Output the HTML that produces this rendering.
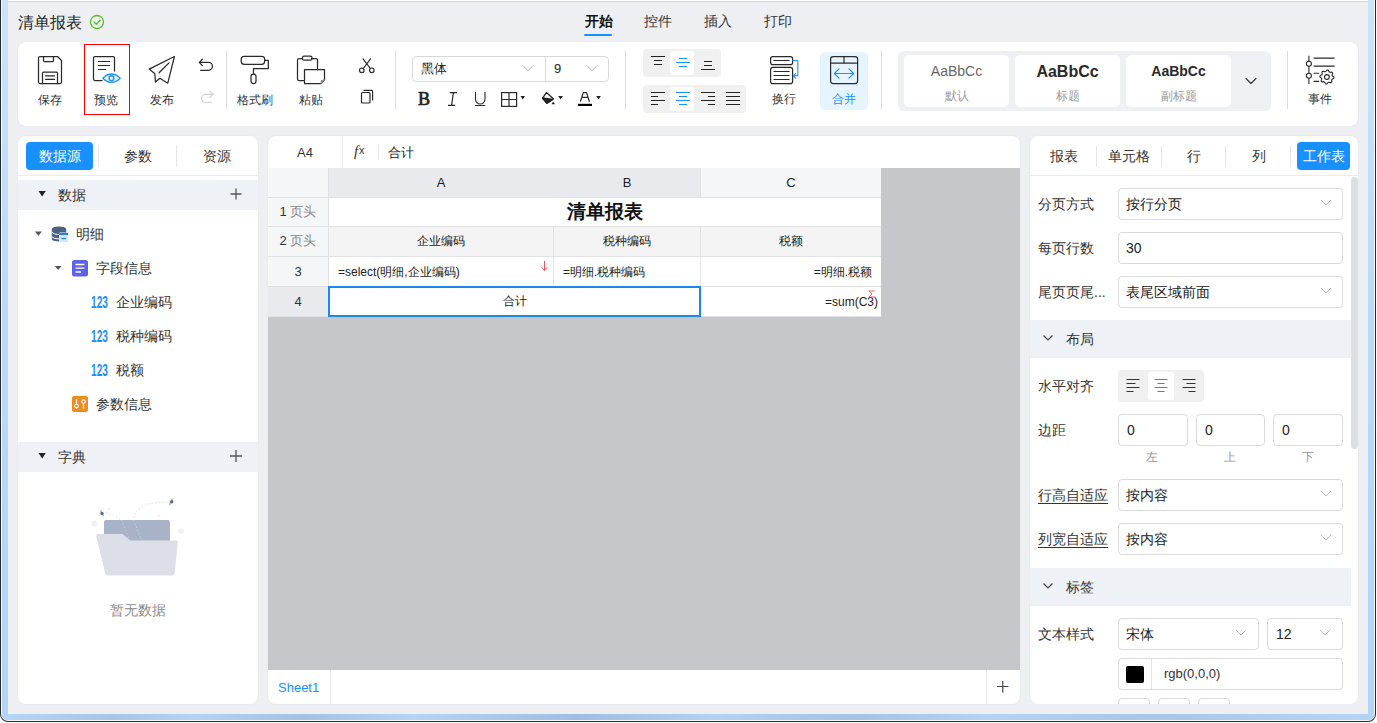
<!DOCTYPE html>
<html><head><meta charset="utf-8">
<style>
*{margin:0;padding:0;box-sizing:border-box}
html,body{width:1377px;height:723px;overflow:hidden;background:#fff}
body{position:relative;font-family:"Liberation Sans",sans-serif;color:#333;font-size:14px}
.a{position:absolute}
.t{position:absolute;white-space:nowrap;line-height:1}
.pnl{position:absolute;background:#fff;border-radius:8px;box-shadow:0 0 2px rgba(0,0,0,0.06)}
.sep{position:absolute;width:1px;background:#dcdcdc}
svg.ov{position:absolute;left:0;top:0;width:1377px;height:723px;overflow:visible}
</style></head><body>
<!-- window frame -->
<div class="a" style="left:0;top:0;width:1377px;height:723px;background:#fff"></div>
<div class="a" style="left:0;top:0;width:1376px;height:722px;background:#252b33;border-radius:0 0 8px 8px"></div>
<div class="a" style="left:1px;top:0;width:1374px;height:721px;background:#f4fbff;border-radius:0 0 7px 7px"></div>
<div class="a" style="left:2px;top:0;width:1372px;height:720px;background:linear-gradient(#cce3fa,#bbdaf8 40%,#b3d4f5);border-radius:0 0 6px 6px"></div>
<div class="a" style="left:2px;top:714px;width:1372px;height:6px;background:linear-gradient(90deg,#b5d6f6 0%,#a6c6e8 8%,#b3d3f3 14%,#a3c3e5 22%,#b4d4f4 30%,#9fbfe2 42%,#b2d2f3 52%,#a4c4e6 62%,#b3d3f4 72%,#a7c7e9 84%,#b4d5f6 100%);border-radius:0 0 6px 6px"></div>
<div class="a" style="left:8px;top:0;width:1360px;height:714px;background:#eeeff3"></div>
<div class="a" style="left:8px;top:0;width:1360px;height:1px;background:#fff"></div>
<div class="a" style="left:8px;top:1px;width:1360px;height:1px;background:#d8d9dc"></div>
<!-- title -->
<div class="t" style="left:18px;top:15px;font-size:16px;color:#222">清单报表</div>
<div class="t" style="left:585px;top:14px;font-size:14px;color:#111;font-weight:bold">开始</div>
<div class="a" style="left:584px;top:34px;width:28px;height:2px;background:#1890ff;border-radius:1px"></div>
<div class="t" style="left:644px;top:14px;font-size:14px;color:#333">控件</div>
<div class="t" style="left:704px;top:14px;font-size:14px;color:#333">插入</div>
<div class="t" style="left:764px;top:14px;font-size:14px;color:#333">打印</div>

<!-- toolbar -->
<div class="pnl" style="left:18px;top:42px;width:1340px;height:84px"></div>
<div id="toolbar">
<div class="t" style="left:38px;top:94px;font-size:12px;color:#333">保存</div>
<div class="a" style="left:84px;top:44px;width:46px;height:71px;border:1px solid #f00"></div>
<div class="t" style="left:94px;top:94px;font-size:12px;color:#333">预览</div>
<div class="t" style="left:150px;top:94px;font-size:12px;color:#333">发布</div>
<div class="sep" style="left:226px;top:51px;height:58px"></div>
<div class="t" style="left:237px;top:94px;font-size:12px;color:#333">格式刷</div>
<div class="t" style="left:299px;top:94px;font-size:12px;color:#333">粘贴</div>
<div class="sep" style="left:395px;top:51px;height:58px"></div>
<div class="a" style="left:412px;top:56px;width:197px;height:26px;border:1px solid #d9d9d9;border-radius:4px"></div>
<div class="a" style="left:545px;top:57px;width:1px;height:24px;background:#d9d9d9"></div>
<div class="t" style="left:421px;top:62px;font-size:13px;color:#222">黑体</div>
<div class="t" style="left:554px;top:62px;font-size:13px;color:#222">9</div>
<div class="t" style="left:418px;top:90px;font-size:18px;color:#222;font-family:'Liberation Serif',serif;-webkit-text-stroke:0.7px #222">B</div>


<div class="sep" style="left:625px;top:51px;height:58px"></div>
<div class="a" style="left:643px;top:49px;width:78px;height:28px;background:#f0f0f0;border-radius:4px"></div>
<div class="a" style="left:670px;top:51px;width:24px;height:24px;background:#fff;border-radius:3px"></div>
<div class="a" style="left:643px;top:85px;width:103px;height:28px;background:#f0f0f0;border-radius:4px"></div>
<div class="a" style="left:670px;top:87px;width:24px;height:24px;background:#fff;border-radius:3px"></div>
<div class="t" style="left:772px;top:93px;font-size:12px;color:#333">换行</div>
<div class="a" style="left:820px;top:52px;width:48px;height:58px;background:#e6f4ff;border-radius:5px"></div>
<div class="t" style="left:832px;top:93px;font-size:12px;color:#1890ff">合并</div>
<div class="sep" style="left:881px;top:51px;height:58px"></div>
<div class="a" style="left:898px;top:51px;width:373px;height:60px;background:#eff0f4;border-radius:6px"></div>
<div class="a" style="left:904px;top:55px;width:105px;height:52px;background:#fff;border-radius:5px"></div>
<div class="a" style="left:1015px;top:55px;width:105px;height:52px;background:#fff;border-radius:5px"></div>
<div class="a" style="left:1126px;top:55px;width:105px;height:52px;background:#fff;border-radius:5px"></div>
<div class="t" style="left:904px;top:64px;width:105px;text-align:center;font-size:14px;color:#666">AaBbCc</div>
<div class="t" style="left:904px;top:90px;width:105px;text-align:center;font-size:12px;color:#999">默认</div>
<div class="t" style="left:1015px;top:64px;width:105px;text-align:center;font-size:16px;color:#2a2a2a;font-weight:bold">AaBbCc</div>
<div class="t" style="left:1015px;top:90px;width:105px;text-align:center;font-size:12px;color:#999">标题</div>
<div class="t" style="left:1126px;top:64px;width:105px;text-align:center;font-size:14px;color:#2a2a2a;font-weight:bold">AaBbCc</div>
<div class="t" style="left:1126px;top:90px;width:105px;text-align:center;font-size:12px;color:#999">副标题</div>
<div class="sep" style="left:1287px;top:51px;height:58px"></div>
<div class="t" style="left:1308px;top:93px;font-size:12px;color:#333">事件</div>
</div>
<svg class="ov" viewBox="0 0 1377 723" fill="none" stroke="#2a2a2a" stroke-width="1.25" stroke-linecap="round" stroke-linejoin="round">
<!-- check -->
<circle cx="97" cy="22" r="6.5" stroke="#52c41a" stroke-width="1.3"/>
<path d="M94,22 L96.3,24.3 L100,20.3" stroke="#52c41a" stroke-width="1.3"/>
<!-- save -->
<path d="M40,56.5 H57.5 L61.5,60.5 V82 Q61.5,83.5 60,83.5 H40 Q38.5,83.5 38.5,82 V58 Q38.5,56.5 40,56.5 Z"/>
<path d="M43.5,56.5 V60.5 Q43.5,61.5 44.5,61.5 H52.5 Q53.5,61.5 53.5,60.5 V56.5"/>
<path d="M42.5,83.5 V73 Q42.5,72 43.5,72 H56.5 Q57.5,72 57.5,73 V83.5"/>
<path d="M45.5,75.8 H54.5 M45.5,79.3 H54.5"/>
<!-- preview -->
<path d="M102,80.5 H95 Q93.5,80.5 93.5,79 V58 Q93.5,56.5 95,56.5 H113 Q114.5,56.5 114.5,58 V71"/>
<path d="M98,61.5 H110 M98,65.5 H110 M98,69.5 H106" stroke-width="1.1" stroke-linecap="butt"/>
<path d="M102.8,78.2 Q111.5,69.8 120.3,78.2 Q111.5,86.6 102.8,78.2 Z" stroke="#1890ff" fill="#e8f4ff" stroke-width="1.2"/>
<circle cx="111.5" cy="78.2" r="2.4" stroke="#1890ff" stroke-width="1.4"/>
<!-- publish -->
<path d="M149.2,69.1 L174.4,56.5 L167.8,83.2 L159.9,78.2 L155.4,82 L154.9,73.7 Z"/>
<path d="M159.1,72.8 L169,62.9"/>
<!-- undo/redo -->
<path d="M199.5,62.4 H208.5 A3.95,3.95 0 0 1 208.5,70.3 H200.6 M202.3,59.2 L199.3,62.4 L202.3,65.6"/>
<path d="M213,94.4 H205.5 A3.95,3.95 0 0 0 205.5,102.3 H211.4 M210,91.2 L213,94.4 L210,97.6" stroke="#d0d0d0" stroke-width="1.1"/>
<!-- brush -->
<rect x="241.2" y="56.3" width="23.5" height="8" rx="3"/>
<path d="M264.7,60.3 H268.3 V68.5 H253.5 V74"/>
<rect x="251" y="74" width="5" height="9.5" rx="2.5"/>
<!-- paste -->
<path d="M304,80.5 H299 Q297.5,80.5 297.5,79 V60 Q297.5,58.5 299,58.5 H302.5 M311.5,58.5 H316 Q317.5,58.5 317.5,60 V69.5"/>
<rect x="302.5" y="56.2" width="9.5" height="4" rx="1.5"/>
<path d="M304.5,69.5 H324.5 V80 L321,83.5 H304.5 Z"/>
<path d="M321,83.5 L321.5,80.5 L324.5,80 Z" fill="#888" stroke="#888" stroke-width="1"/>
<!-- scissors -->
<g stroke-width="1.2">
<circle cx="361.8" cy="70.3" r="2.3"/><circle cx="371.8" cy="70.3" r="2.3"/>
<path d="M363.3,68.5 L370.5,58.8 M370.3,68.5 L363.1,58.8"/>
</g>
<!-- copy -->
<g stroke-width="1.2">
<rect x="361.5" y="92.5" width="8.5" height="10.5" rx="1"/>
<path d="M364,90.3 H371.5 Q372.6,90.3 372.6,91.4 V100"/>
</g>
<!-- font chevrons -->
<path d="M523.3,65.8 L528,70.8 L532.7,65.8 M587.3,65.8 L592,70.8 L596.7,65.8" stroke="#bbb" stroke-width="1"/>
<!-- underline bar under U -->
<path d="M449.8,92.6 H457 M448,105.4 H455.2 M453.4,92.6 L451.6,105.4" stroke-width="1.2" stroke-linecap="butt"/>
<path d="M475.5,92 V99.2 A4.75,4.75 0 0 0 485,99.2 V92" stroke-width="1.1" stroke-linecap="butt"/>
<path d="M475,105.5 H485.3" stroke-width="1" stroke-linecap="butt"/>
<!-- border grid -->
<g stroke-width="1.2" stroke-linejoin="miter"><rect x="501.6" y="92.6" width="15" height="13.8"/><path d="M509,92.6 V106.4 M501.6,99.5 H516.6"/></g>
<path d="M520.5,96 L525,96 L522.75,99.5 Z M558.2,96 L562.9,96 L560.55,99.5 Z M596.2,96 L600.9,96 L598.55,99.5 Z" fill="#222" stroke="none"/>
<!-- paint bucket -->
<path d="M546.4,92.6 L553.3,98.8 L547,103.3 L542.4,98.4 Z" stroke="#222" stroke-width="1.3"/>
<path d="M542.6,97.8 L553,99.5 L547,103.3 Z" fill="#222" stroke="#222" stroke-width="1.3"/>
<path d="M553.2,101.5 L555,104.3 L551.6,104.3 Z" fill="#222" stroke="none"/>
<!-- font color A -->
<path d="M580.5,101.3 L583.3,92.6 H586.5 L589.3,101.3 M581.8,97.3 H588" stroke-width="1.2" stroke-linejoin="miter"/>
<rect x="578" y="103.8" width="14" height="2.2" fill="#000" stroke="none"/>
<!-- vertical align icons -->
<g stroke-width="1" stroke-linecap="butt" stroke="#222">
<path d="M651,56.5 H665 M654,60.5 H662 M654,64.5 H662"/>
<path d="M679,58.5 H687 M676,62.5 H690 M679,66.5 H687" stroke="#1890ff"/>
<path d="M704,61.5 H712 M704,65.5 H712 M701,69.5 H715"/>
<!-- horizontal align -->
<path d="M651,92.5 H665 M651,96.5 H658 M651,100.5 H665 M651,104.5 H658"/>
<path d="M676,92.5 H690 M679,96.5 H687 M676,100.5 H690 M679,104.5 H687" stroke="#1890ff"/>
<path d="M701,92.5 H715 M708,96.5 H715 M701,100.5 H715 M708,104.5 H715"/>
<path d="M726,92.5 H740 M726,96.5 H740 M726,100.5 H740 M726,104.5 H740"/>
</g>
<!-- wrap -->
<g stroke-width="1.2">
<rect x="770.6" y="56.6" width="22" height="8" rx="2.2"/>
<rect x="770.6" y="67.3" width="22" height="16.3" rx="2.2"/>
<path d="M773.5,60.5 H789.5 M773.5,71.5 H789.5 M773.5,75.5 H789.5 M773.5,79.5 H789.5" stroke-width="1" stroke-linecap="butt"/>
<path d="M793,60.5 H797.8 V75.8 H793.5 M795.6,73.6 L793.3,75.8 L795.6,78" stroke="#1890ff" stroke-width="1.1"/>
</g>
<!-- merge -->
<g stroke-width="1.2">
<rect x="830.6" y="56.6" width="27" height="27" rx="2.5"/>
<path d="M830.6,63.2 H857.6 M844,56.6 V63.2"/>
<path d="M834.5,73.5 H853.5 M839,68.9 L834.4,73.5 L839,78.1 M849,68.9 L853.6,73.5 L849,78.1" stroke="#1890ff" stroke-width="1.1"/>
</g>
<!-- gallery chevron -->
<path d="M1246,78.5 L1251,83.5 L1256,78.5" stroke="#333" stroke-width="1.1"/>
<!-- event -->
<g stroke-width="1.1">
<path d="M1308.9,56 V61.2 M1308.9,66.4 V73.1 M1308.9,78.3 V83.5"/>
<circle cx="1308.9" cy="63.8" r="2.5"/><circle cx="1308.9" cy="75.7" r="2.5"/>
<path d="M1314,58.1 H1334.2 M1314,66.1 H1334.2 M1314,73.2 H1318.7 M1314,81.4 H1318.7"/>
<circle cx="1326.9" cy="77.0" r="2.4"/>
<path d="M1326.90,70.00 L1328.27,70.13 L1329.04,71.83 L1330.01,72.34 L1331.85,72.05 L1332.72,73.11 L1332.07,74.86 L1332.39,75.91 L1333.90,77.00 L1333.77,78.37 L1332.07,79.14 L1331.56,80.11 L1331.85,81.95 L1330.79,82.82 L1329.04,82.17 L1327.99,82.49 L1326.90,84.00 L1325.53,83.87 L1324.76,82.17 L1323.79,81.66 L1321.95,81.95 L1321.08,80.89 L1321.73,79.14 L1321.41,78.09 L1319.90,77.00 L1320.03,75.63 L1321.73,74.86 L1322.24,73.89 L1321.95,72.05 L1323.01,71.18 L1324.76,71.83 L1325.81,71.51 Z" stroke-linejoin="round"/>
</g>
</svg>


<!-- panels -->
<div class="pnl" style="left:18px;top:136px;width:240px;height:568px"></div>
<div class="pnl" style="left:268px;top:136px;width:752px;height:568px"></div>
<div class="pnl" style="left:1030px;top:136px;width:328px;height:568px"></div>
<!-- center panel -->
<div class="a" style="left:268px;top:168px;width:752px;height:502px;background:#c6c7cb"></div>
<div class="a" style="left:342px;top:136px;width:1px;height:32px;background:#ebebeb"></div>
<div class="t" style="left:297px;top:146px;font-size:13px;color:#333">A4</div>
<div class="t" style="left:354px;top:144px;font-size:15px;color:#333;font-family:'Liberation Serif',serif;font-style:italic">f</div>
<div class="t" style="left:359px;top:145px;font-size:11px;color:#333">x</div>
<div class="a" style="left:378px;top:144px;width:1px;height:16px;background:#e5e5e5"></div>
<div class="t" style="left:388px;top:146px;font-size:13px;color:#222">合计</div>
<!-- grid -->
<div class="a" style="left:268px;top:168px;width:613px;height:149px;background:#e1e1e3"></div>
<div class="a" style="left:268px;top:168px;width:60px;height:29px;background:#f5f6f8"></div>
<div class="a" style="left:329px;top:168px;width:371px;height:29px;background:#e9eaed"></div>
<div class="a" style="left:701px;top:168px;width:180px;height:29px;background:#f5f6f8"></div>
<div class="a" style="left:268px;top:198px;width:60px;height:28px;background:#f5f6f8"></div>
<div class="a" style="left:268px;top:227px;width:60px;height:29px;background:#f5f6f8"></div>
<div class="a" style="left:268px;top:257px;width:60px;height:29px;background:#f5f6f8"></div>
<div class="a" style="left:268px;top:287px;width:60px;height:29px;background:#e9eaed"></div>
<div class="a" style="left:329px;top:198px;width:552px;height:28px;background:#fff"></div>
<div class="a" style="left:329px;top:227px;width:224px;height:29px;background:#f4f4f5"></div>
<div class="a" style="left:554px;top:227px;width:146px;height:29px;background:#f4f4f5"></div>
<div class="a" style="left:701px;top:227px;width:180px;height:29px;background:#f4f4f5"></div>
<div class="a" style="left:329px;top:257px;width:224px;height:29px;background:#fff"></div>
<div class="a" style="left:554px;top:257px;width:146px;height:29px;background:#fff"></div>
<div class="a" style="left:701px;top:257px;width:180px;height:29px;background:#fff"></div>
<div class="a" style="left:329px;top:287px;width:371px;height:29px;background:#fff"></div>
<div class="a" style="left:701px;top:287px;width:180px;height:29px;background:#fff"></div>
<div class="a" style="left:328px;top:286px;width:373px;height:31px;border:2px solid #1a88f0"></div>
<div class="t" style="left:329px;top:176px;width:224px;text-align:center;font-size:13px;color:#222">A</div>
<div class="t" style="left:554px;top:176px;width:146px;text-align:center;font-size:13px;color:#222">B</div>
<div class="t" style="left:701px;top:176px;width:180px;text-align:center;font-size:13px;color:#222">C</div>
<div class="t" style="left:268px;top:205px;width:60px;text-align:center;font-size:13px;color:#333">1 <span style="color:#888">页头</span></div>
<div class="t" style="left:268px;top:234px;width:60px;text-align:center;font-size:13px;color:#333">2 <span style="color:#888">页头</span></div>
<div class="t" style="left:268px;top:265px;width:60px;text-align:center;font-size:13px;color:#333">3</div>
<div class="t" style="left:268px;top:295px;width:60px;text-align:center;font-size:13px;color:#333">4</div>
<div class="t" style="left:329px;top:202px;width:552px;text-align:center;font-size:19px;color:#111;font-weight:bold">清单报表</div>
<div class="t" style="left:329px;top:235px;width:224px;text-align:center;font-size:12px;color:#222">企业编码</div>
<div class="t" style="left:554px;top:235px;width:146px;text-align:center;font-size:12px;color:#222">税种编码</div>
<div class="t" style="left:701px;top:235px;width:180px;text-align:center;font-size:12px;color:#222">税额</div>
<div class="t" style="left:338px;top:266px;font-size:12px;color:#222">=select(明细,企业编码)</div>
<div class="t" style="left:563px;top:266px;font-size:12px;color:#222">=明细.税种编码</div>
<div class="t" style="left:701px;top:266px;width:171px;text-align:right;font-size:12px;color:#222">=明细.税额</div>
<div class="t" style="left:329px;top:295px;width:371px;text-align:center;font-size:12px;color:#222">合计</div>
<div class="t" style="left:701px;top:296px;width:177px;text-align:right;font-size:12px;color:#222">=sum(C3)</div>
<!-- sheet tabs -->
<div class="t" style="left:278px;top:681px;font-size:13px;color:#1890ff">Sheet1</div>
<div class="a" style="left:330px;top:670px;width:1px;height:34px;background:#e8e8e8"></div>
<div class="a" style="left:986px;top:670px;width:1px;height:34px;background:#e8e8e8"></div>
<svg class="ov" viewBox="0 0 1377 723" fill="none" stroke="#333" stroke-width="1.2">
<path d="M997,686.5 H1008.5 M1002.75,681 V692.5" stroke="#444"/>
<path d="M544.5,261 V270 M541.8,267.3 L544.5,270.5 L547.2,267.3" stroke="#f5525a" stroke-width="1"/>
<path d="M874.8,291 H868.8 L872,294 L868.8,297 H875" stroke="#f5525a" stroke-width="0.9"/>
</svg>
<!-- right panel -->
<div class="t" style="left:1050px;top:149px;font-size:14px;color:#333">报表</div>
<div class="sep" style="left:1096px;top:146px;height:21px;background:#e5e5e5"></div>
<div class="t" style="left:1108px;top:149px;font-size:14px;color:#333">单元格</div>
<div class="sep" style="left:1161px;top:146px;height:21px;background:#e5e5e5"></div>
<div class="t" style="left:1187px;top:149px;font-size:14px;color:#333">行</div>
<div class="sep" style="left:1225px;top:146px;height:21px;background:#e5e5e5"></div>
<div class="t" style="left:1252px;top:149px;font-size:14px;color:#333">列</div>
<div class="sep" style="left:1290px;top:146px;height:21px;background:#e5e5e5"></div>
<div class="a" style="left:1297px;top:142px;width:53px;height:28px;background:#1890ff;border-radius:4px"></div>
<div class="t" style="left:1297px;top:149px;width:53px;text-align:center;font-size:14px;color:#fff">工作表</div>
<div class="a" style="left:1030px;top:175px;width:328px;height:1px;background:#ebebeb"></div>
<div class="a" style="left:1351px;top:177px;width:7px;height:272px;background:#dcdfe4;border-radius:3.5px"></div>

<div class="t" style="left:1038px;top:197px;font-size:14px;color:#333">分页方式</div>
<div class="a" style="left:1118px;top:188px;width:225px;height:32px;border:1px solid #d9d9d9;border-radius:4px"></div>
<div class="t" style="left:1126px;top:197px;font-size:14px;color:#222">按行分页</div>
<div class="t" style="left:1038px;top:241px;font-size:14px;color:#333">每页行数</div>
<div class="a" style="left:1118px;top:232px;width:225px;height:32px;border:1px solid #d9d9d9;border-radius:4px"></div>
<div class="t" style="left:1126px;top:241px;font-size:14px;color:#222">30</div>
<div class="t" style="left:1038px;top:285px;font-size:14px;color:#333">尾页页尾...</div>
<div class="a" style="left:1118px;top:276px;width:225px;height:32px;border:1px solid #d9d9d9;border-radius:4px"></div>
<div class="t" style="left:1126px;top:285px;font-size:14px;color:#222">表尾区域前面</div>

<div class="a" style="left:1030px;top:320px;width:321px;height:38px;background:#eef2f7"></div>
<div class="t" style="left:1066px;top:332px;font-size:14px;color:#333">布局</div>

<div class="t" style="left:1038px;top:379px;font-size:14px;color:#333">水平对齐</div>
<div class="a" style="left:1118px;top:370px;width:86px;height:32px;background:#f0f0f0;border-radius:4px"></div>
<div class="a" style="left:1148px;top:372px;width:26px;height:28px;background:#fff;border-radius:3px"></div>

<div class="t" style="left:1038px;top:423px;font-size:14px;color:#333">边距</div>
<div class="a" style="left:1118px;top:414px;width:70px;height:32px;border:1px solid #d9d9d9;border-radius:4px"></div>
<div class="a" style="left:1196px;top:414px;width:69px;height:32px;border:1px solid #d9d9d9;border-radius:4px"></div>
<div class="a" style="left:1273px;top:414px;width:70px;height:32px;border:1px solid #d9d9d9;border-radius:4px"></div>
<div class="t" style="left:1127px;top:423px;font-size:14px;color:#222">0</div>
<div class="t" style="left:1205px;top:423px;font-size:14px;color:#222">0</div>
<div class="t" style="left:1282px;top:423px;font-size:14px;color:#222">0</div>
<div class="t" style="left:1146px;top:451px;font-size:12px;color:#999">左</div>
<div class="t" style="left:1224px;top:451px;font-size:12px;color:#999">上</div>
<div class="t" style="left:1302px;top:451px;font-size:12px;color:#999">下</div>

<div class="t" style="left:1038px;top:488px;font-size:14px;color:#333;text-decoration:underline;text-underline-offset:3px">行高自适应</div>
<div class="a" style="left:1118px;top:479px;width:225px;height:32px;border:1px solid #d9d9d9;border-radius:4px"></div>
<div class="t" style="left:1126px;top:488px;font-size:14px;color:#222">按内容</div>
<div class="t" style="left:1038px;top:532px;font-size:14px;color:#333;text-decoration:underline;text-underline-offset:3px">列宽自适应</div>
<div class="a" style="left:1118px;top:523px;width:225px;height:32px;border:1px solid #d9d9d9;border-radius:4px"></div>
<div class="t" style="left:1126px;top:532px;font-size:14px;color:#222">按内容</div>

<div class="a" style="left:1030px;top:568px;width:321px;height:38px;background:#eef2f7"></div>
<div class="t" style="left:1066px;top:580px;font-size:14px;color:#333">标签</div>

<div class="t" style="left:1038px;top:627px;font-size:14px;color:#333">文本样式</div>
<div class="a" style="left:1118px;top:618px;width:141px;height:32px;border:1px solid #d9d9d9;border-radius:4px"></div>
<div class="t" style="left:1126px;top:627px;font-size:14px;color:#222">宋体</div>
<div class="a" style="left:1267px;top:618px;width:76px;height:32px;border:1px solid #d9d9d9;border-radius:4px"></div>
<div class="t" style="left:1276px;top:627px;font-size:14px;color:#222">12</div>
<div class="a" style="left:1118px;top:658px;width:225px;height:32px;border:1px solid #d9d9d9;border-radius:4px"></div>
<div class="a" style="left:1126px;top:666px;width:18px;height:17px;background:#000;border-radius:2px"></div>
<div class="a" style="left:1151px;top:659px;width:1px;height:30px;background:#e5e5e5"></div>
<div class="t" style="left:1164px;top:667px;font-size:13px;color:#333">rgb(0,0,0)</div>
<div class="a" style="left:1118px;top:698px;width:32px;height:14px;border:1px solid #d9d9d9;border-radius:4px"></div>
<div class="a" style="left:1158px;top:698px;width:32px;height:14px;border:1px solid #d9d9d9;border-radius:4px"></div>
<div class="a" style="left:1198px;top:698px;width:32px;height:14px;border:1px solid #d9d9d9;border-radius:4px"></div>
<div class="a" style="left:1030px;top:704px;width:328px;height:10px;background:#eeeff3"></div>
<svg class="ov" viewBox="0 0 1377 723" fill="none" stroke="#bbb" stroke-width="1">
<path d="M1321,200 L1326,205 L1331,200 M1321,288 L1326,293 L1331,288 M1321,491 L1326,496 L1331,491 M1321,535 L1326,540 L1331,535 M1236,630 L1241,635 L1246,630 M1320,630 L1325,635 L1330,630"/>
<path d="M1043.5,335.5 L1048,340 L1052.5,335.5 M1043.5,583.5 L1048,588 L1052.5,583.5" stroke="#444" stroke-width="1.2"/>
<g stroke-width="1.1">
<path d="M1126.5,379.5 H1139.5 M1126.5,383.5 H1135.5 M1126.5,387.5 H1139.5 M1126.5,391.5 H1133.5" stroke="#333"/>
<path d="M1154.5,379.5 H1167.5 M1157.5,383.5 H1164.5 M1154.5,387.5 H1167.5 M1157.5,391.5 H1164.5" stroke="#1890ff"/>
<path d="M1182.5,379.5 H1195.5 M1186.5,383.5 H1195.5 M1182.5,387.5 H1195.5 M1188.5,391.5 H1195.5" stroke="#333"/>
</g>
</svg>
<!-- left panel content -->
<div class="a" style="left:26px;top:142px;width:67px;height:28px;background:#1890ff;border-radius:4px"></div>
<div class="t" style="left:26px;top:149px;width:67px;text-align:center;font-size:14px;color:#fff">数据源</div>
<div class="sep" style="left:98px;top:145px;height:22px;background:#e5e5e5"></div>
<div class="t" style="left:124px;top:149px;font-size:14px;color:#333">参数</div>
<div class="sep" style="left:176px;top:145px;height:22px;background:#e5e5e5"></div>
<div class="t" style="left:203px;top:149px;font-size:14px;color:#333">资源</div>
<div class="a" style="left:18px;top:175px;width:240px;height:1px;background:#ebebeb"></div>
<div class="a" style="left:18px;top:180px;width:240px;height:30px;background:#eef2f7"></div>
<div class="t" style="left:58px;top:188px;font-size:14px;color:#333">数据</div>
<div class="t" style="left:76px;top:227px;font-size:14px;color:#333">明细</div>
<div class="t" style="left:96px;top:261px;font-size:14px;color:#333">字段信息</div>
<div class="t" style="left:91px;top:294px;font-size:17px;color:#1890ff;font-weight:bold;transform:scaleX(0.6);transform-origin:0 0">123</div>
<div class="t" style="left:116px;top:295px;font-size:14px;color:#333">企业编码</div>
<div class="t" style="left:91px;top:328px;font-size:17px;color:#1890ff;font-weight:bold;transform:scaleX(0.6);transform-origin:0 0">123</div>
<div class="t" style="left:116px;top:329px;font-size:14px;color:#333">税种编码</div>
<div class="t" style="left:91px;top:362px;font-size:17px;color:#1890ff;font-weight:bold;transform:scaleX(0.6);transform-origin:0 0">123</div>
<div class="t" style="left:116px;top:363px;font-size:14px;color:#333">税额</div>
<div class="t" style="left:96px;top:397px;font-size:14px;color:#333">参数信息</div>
<div class="a" style="left:18px;top:442px;width:240px;height:30px;background:#eef2f7"></div>
<div class="t" style="left:58px;top:450px;font-size:14px;color:#333">字典</div>
<div class="t" style="left:110px;top:603px;font-size:14px;color:#8c8c8c">暂无数据</div>
<svg class="ov" viewBox="0 0 1377 723" fill="none" stroke="#333" stroke-width="1.2">
<path d="M38.5,191 H45.8 L42.15,196.5 Z" fill="#222" stroke="none"/>
<path d="M38.5,453 H45.8 L42.15,458.5 Z" fill="#222" stroke="none"/>
<path d="M34.9,231.6 H41.9 L38.4,235.8 Z" fill="#555" stroke="none"/>
<path d="M54.7,265.9 H61.6 L58.15,270 Z" fill="#555" stroke="none"/>
<path d="M230.5,194 H241.5 M236,188.5 V199.5 M230,456 H242 M236,450 V462" stroke="#555" stroke-width="1.3"/>
<!-- db icon -->
<g>
<path d="M51.8,229.5 Q51.8,226.4 59,226.4 Q66.2,226.4 66.2,229.5 V232.5 H59.3 V241.6 Q51.8,241.5 51.8,238.8 Z" fill="#4c6080" stroke="none"/>
<path d="M51.8,232.3 Q54,234.6 59.3,234.6 M51.8,236.8 Q54,239 59.3,239" stroke="#fff" stroke-width="1"/>
<rect x="59.3" y="232.8" width="8.7" height="9.1" rx="0.8" fill="#cfe5fb" stroke="none"/>
<rect x="59.3" y="232.8" width="8.7" height="2.2" fill="#2a7fd9" stroke="none"/>
<path d="M61.5,238.5 H66" stroke="#2a7fd9" stroke-width="1.2"/>
</g>
<!-- field info icon -->
<rect x="72" y="260" width="16" height="16.5" rx="2.5" fill="#5b63e6" stroke="none"/>
<path d="M75.5,264.5 H84.5 M75.5,268.2 H84.5 M75.5,272 H81" stroke="#fff" stroke-width="1.3"/>
<!-- param info icon -->
<rect x="72" y="396" width="16" height="16" rx="2" fill="#f08c1e" stroke="none"/>
<path d="M76.5,399 V409 M83.5,399 V409" stroke="#fff" stroke-width="1.2"/>
<circle cx="76.5" cy="406" r="1.8" fill="#f08c1e" stroke="#fff" stroke-width="1.1"/>
<circle cx="83.5" cy="401.5" r="1.8" fill="#f08c1e" stroke="#fff" stroke-width="1.1"/>
<!-- empty folder -->
<rect x="104" y="520" width="66" height="22" rx="2" fill="#a9b3c7" stroke="none"/>
<path d="M98,534 H122.5 L130.3,540.6 H176 Q178,540.6 177.8,542.6 L174.6,573.4 Q174.4,575.4 172.4,575.4 H107.6 Q105.6,575.4 105.2,573.4 L96.2,536 Q96,534 98,534 Z" fill="#dcdfe8" stroke="none"/>
<path d="M121.5,520 L129.5,540 M133.5,520 L141.5,540" stroke="#c9cfdb" stroke-width="1" stroke-dasharray="1.5 2"/>
<path d="M106,513 Q115,515 121,520 M134,518 Q136,505 155,503 Q165,502 170,502" stroke="#d0d4dd" stroke-width="0.9" stroke-dasharray="1.5 2"/>
<path d="M100.5,510 L103.5,516.5 M169.5,505 L172.5,498.5" stroke="#b5bccb" stroke-width="1.6"/>
<circle cx="102" cy="513.4" r="1.7" fill="#5c6a85" stroke="none"/>
<circle cx="171.7" cy="501.8" r="1.7" fill="#5c6a85" stroke="none"/>
<circle cx="94.5" cy="523.5" r="3" fill="#f0f1f4" stroke="none"/>
<circle cx="181" cy="531.4" r="3" fill="#f0f1f4" stroke="none"/>
<circle cx="108.5" cy="509" r="1.2" fill="#eceef2" stroke="none"/>
<circle cx="158.5" cy="515.5" r="1.2" fill="#eceef2" stroke="none"/>
</svg>
</body></html>
